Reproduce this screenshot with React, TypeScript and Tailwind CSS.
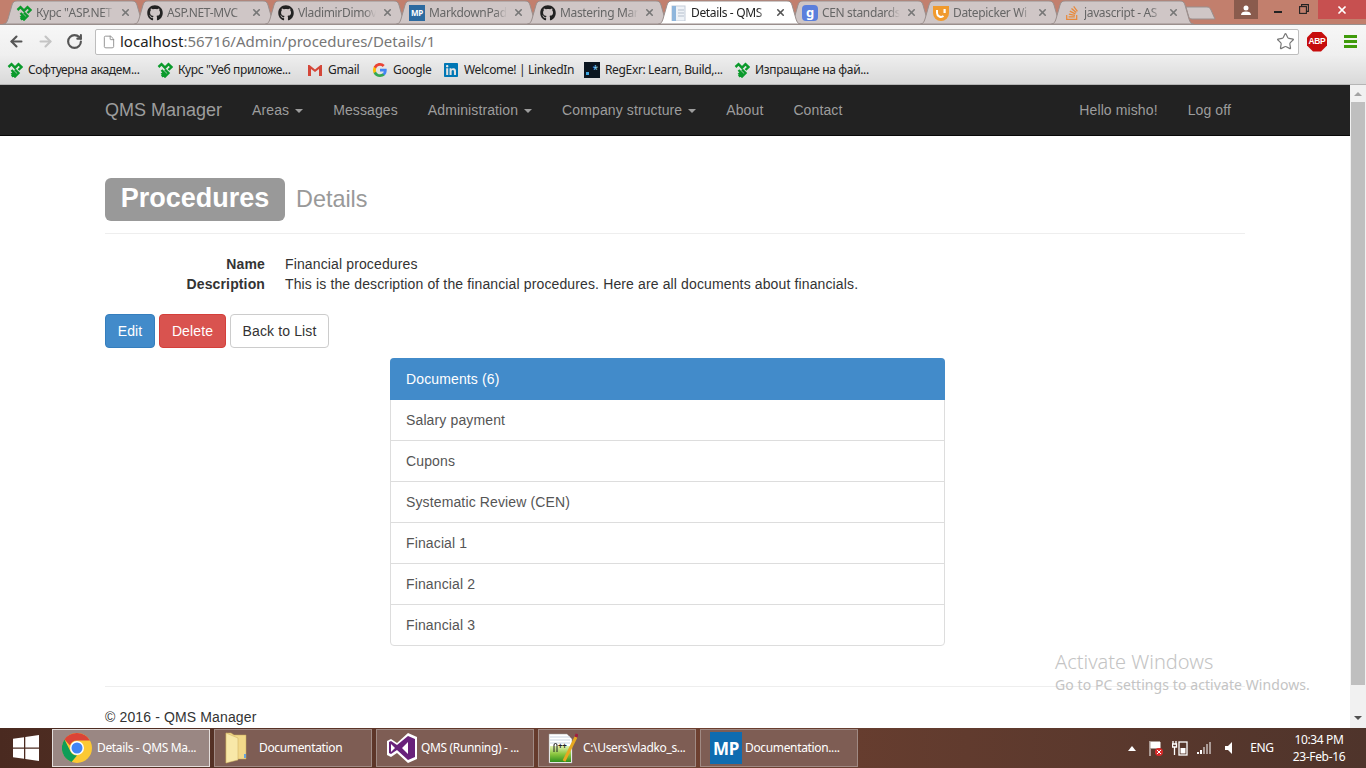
import { ArrowLeft, ArrowRight, RotateCw, Star, File, X } from 'lucide-react'
import { FaGithub, FaLinkedin, FaStackOverflow } from 'react-icons/fa'

const UI_FONT = "font-['Noto_Sans','Open_Sans',sans-serif] tracking-[-0.35px]"

const SoftUni = ({ className = 'w-4 h-4' }: { className?: string }) => (
  <svg viewBox="0 0 16 16" className={className} fill="none" stroke="#0a9a2b" strokeWidth="2.400">
    <path d="M1.500 5 4.500 2.200 8 5.700 11.500 2.200 14.500 5 11.500 8" />
    <path d="M4.500 8 8 11.500 4.800 14.500M8 7.500 11.500 11 8 14.500 4.500 11" />
  </svg>
)

const MpIcon = ({ className = 'w-4 h-4 text-[8px] bg-[#2c6aa0]' }: { className?: string }) => (
  <span className={`flex items-center justify-center text-white font-bold leading-none ${className}`}>
    MP
  </span>
)

const DocIcon = () => (
  <svg viewBox="0 0 16 16" className="w-4 h-4">
    <rect x="1" y="1" width="13" height="15" fill="#eef2f7" stroke="#c3ccd8" />
    <rect x="1" y="1" width="4" height="15" fill="#8fb6dc" />
    <path d="M7 5h6M7 8h6M7 11h6" stroke="#b5bfcc" />
  </svg>
)

const GoogleG = ({ className = 'w-4 h-4' }: { className?: string }) => (
  <svg viewBox="0 0 16 16" className={className}>
    <path d="M14.700 8.200c0-.5 0-1-.1-1.400H8v2.700h3.800a3.200 3.200 0 0 1-1.400 2.100v1.700h2.300c1.300-1.200 2-3 2-5.100z" fill="#4285f4" />
    <path d="M8 15c1.900 0 3.400-.6 4.700-1.700l-2.300-1.700c-.6.4-1.400.7-2.400.7-1.800 0-3.400-1.200-3.900-2.900H1.700v1.800A7 7 0 0 0 8 15z" fill="#34a853" />
    <path d="M4.100 9.400a4.200 4.200 0 0 1 0-2.800V4.800H1.700a7 7 0 0 0 0 6.400z" fill="#fbbc05" />
    <path d="M8 3.800c1 0 2 .4 2.700 1.100l2-2A7 7 0 0 0 1.700 4.800l2.400 1.800C4.600 5 6.200 3.800 8 3.800z" fill="#ea4335" />
  </svg>
)

const CenIcon = () => (
  <span className="flex items-center justify-center w-4 h-4 rounded-sm bg-[#5b7fdc] text-white text-[13px] font-bold leading-none">g</span>
)

const DatepickerIcon = () => (
  <svg viewBox="0 0 16 16" className="w-4 h-4">
    <path d="M0 1h16v7a8 8 0 0 1-16 0z" fill="#f09a2e" />
    <path d="M4 5v3a4 4 0 0 0 6.500 3" fill="none" stroke="#fff" strokeWidth="2" />
    <rect x="10.500" y="4" width="2.200" height="4" fill="#fff" />
  </svg>
)

const TABS = [
  { title: 'Курс "ASP.NET', icon: <SoftUni /> },
  { title: 'ASP.NET-MVC', icon: <FaGithub className="w-4 h-4 text-[#222]" /> },
  { title: 'VladimirDimov', icon: <FaGithub className="w-4 h-4 text-[#222]" /> },
  { title: 'MarkdownPad', icon: <MpIcon /> },
  { title: 'Mastering Mar', icon: <FaGithub className="w-4 h-4 text-[#222]" /> },
  { title: 'Details - QMS', icon: <DocIcon />, active: true },
  { title: 'CEN standards', icon: <CenIcon /> },
  { title: 'Datepicker Wi', icon: <DatepickerIcon /> },
  { title: 'javascript - AS', icon: <FaStackOverflow className="w-4 h-4 text-[#e8893a]" /> },
]

const Tab = ({ title, icon, active }: { title: string; icon: React.ReactNode; active?: boolean }) => (
  <div className={`relative w-[143px] h-[24px] -mr-[12px] shrink-0 flex items-center pl-[13px] pt-[1px] ${active ? 'z-10 text-[#222]' : 'text-[#666]'}`}>
    <svg viewBox="0 0 143 24" className="absolute inset-0 w-[143px] h-[24px]">
      <path
        d="M0.500 24 C3 24 4 22 5 19 L9 5 C10 2 11 1 14 1 L129 1 C132 1 133 2 134 5 L138 19 C139 22 140 24 142.500 24 Z"
        fill={active ? '#ffffff' : '#cfc6c6'}
        stroke="#9a8f8d"
      />
    </svg>
    <span className="relative shrink-0 w-4 h-4 flex items-center justify-center">{icon}</span>
    <span className="relative ml-1 w-[78px] overflow-hidden whitespace-nowrap text-xs leading-4 [mask-image:linear-gradient(to_right,black_85%,transparent)]">
      {title}
    </span>
    <X className={`relative ml-[6px] w-[11px] h-[11px] shrink-0 ${active ? 'text-[#555]' : 'text-[#777]'}`} strokeWidth={3.500} />
  </div>
)

const TabStrip = () => (
  <div className={`h-[25px] shrink-0 flex items-start pl-[3px] bg-[#c27f6d] border-b border-[#9a8f8d] ${UI_FONT}`}>
    {TABS.map(tab => (
      <Tab key={tab.title} {...tab} />
    ))}
    <svg viewBox="0 0 31 14" className="w-[31px] h-[14px] ml-[3px] mt-[6px] shrink-0">
      <path d="M1 1h21c2 0 3 1 4 3l4 9H7C5 13 4 12 3.500 10z" fill="#cfc6c6" stroke="#9a8f8d" />
    </svg>
    <div className="flex-1" />
    <div className="w-[24px] h-[19px] bg-[#8a5b4d] flex items-center justify-center mr-[16px]">
      <svg viewBox="0 0 12 10" className="w-3 h-[10px]" fill="#fff">
        <circle cx="6" cy="3" r="2.500" />
        <path d="M1 10c0-2.500 2-3.500 5-3.500s5 1 5 3.500z" />
      </svg>
    </div>
    <div className="w-[8px] h-[2px] bg-[#222] mt-[11px] mr-[17px]" />
    <svg viewBox="0 0 10 10" className="w-[10px] h-[10px] mt-[4px] mr-[9px]" fill="none" stroke="#222" strokeWidth="1.100">
      <rect x="0.600" y="2.600" width="6.800" height="6.800" />
      <path d="M2.600 2.500V.6h6.800v6.800H7.500" />
    </svg>
    <div className="w-[48px] h-[19px] bg-[#c75050] flex items-center justify-center">
      <X className="w-3 h-3 text-white" strokeWidth={3.500} />
    </div>
  </div>
)

const Toolbar = () => (
  <div className={`h-[31px] shrink-0 flex items-center pt-[2px] bg-gradient-to-b from-[#f7f7f7] to-[#efefef] ${UI_FONT}`}>
    <ArrowLeft className="ml-[8px] w-[17px] h-[17px] text-[#555]" strokeWidth={3} />
    <ArrowRight className="ml-[12px] w-[17px] h-[17px] text-[#c4c4c4]" strokeWidth={3} />
    <RotateCw className="ml-[12px] w-[17px] h-[17px] text-[#555]" strokeWidth={3} />
    <div className="ml-[12px] w-[1204px] h-[26px] bg-white border border-[#bdbdbd] rounded-[2px] flex items-center pl-[6px]">
      <File className="w-[14px] h-[16px] text-[#888] shrink-0" strokeWidth={1.500} />
      <span className="ml-[4px] text-[15px] tracking-normal leading-none text-[#222] whitespace-nowrap">
        localhost<span className="text-[#777]">:56716/Admin/procedures/Details/1</span>
      </span>
      <div className="flex-1" />
      <Star className="w-[19px] h-[19px] text-[#777] mr-[3px]" strokeWidth={1.500} />
    </div>
    <div className="ml-[8px] w-[20px] h-[20px] bg-[#c70d0d] [clip-path:polygon(30%_0,70%_0,100%_30%,100%_70%,70%_100%,30%_100%,0_70%,0_30%)] flex items-center justify-center">
      <span className="text-white text-[8.5px] font-bold leading-none font-['Liberation_Sans',sans-serif]">ABP</span>
    </div>
    <div className="ml-[17px] w-[13px] flex flex-col gap-[2px]">
      <div className="h-[3px] bg-[#3f9b0b]" />
      <div className="h-[3px] bg-[#3f9b0b]" />
      <div className="h-[3px] bg-[#3f9b0b]" />
    </div>
  </div>
)

const BOOKMARKS = [
  { title: 'Софтуерна академ...', icon: <SoftUni />, width: 'w-[150px]' },
  { title: 'Курс "Уеб приложе...', icon: <SoftUni />, width: 'w-[150px]' },
  {
    title: 'Gmail',
    width: 'w-[65px]',
    icon: (
      <svg viewBox="0 0 16 16" className="w-4 h-4">
        <path d="M1 3v11h3V7l4 3 4-3v7h3V3h-1.500L8 7.500 2.500 3z" fill="#d44638" />
      </svg>
    ),
  },
  { title: 'Google', icon: <GoogleG />, width: 'w-[71px]' },
  { title: 'Welcome! | LinkedIn', icon: <FaLinkedin className="w-4 h-4 text-[#0077b5]" />, width: 'w-[141px]' },
  {
    title: 'RegExr: Learn, Build,...',
    width: 'w-[150px]',
    icon: (
      <span className="relative block w-4 h-4 bg-[#0b1620]">
        <span className="absolute left-[2px] bottom-[3px] w-[3px] h-[3px] bg-[#3da6e0]" />
        <span className="absolute right-[2px] top-[-1px] text-[10px] leading-4 text-[#7fd0ff]">*</span>
      </span>
    ),
  },
  { title: 'Изпращане на фай...', icon: <SoftUni />, width: 'w-[150px]' },
]

const BookmarksBar = () => (
  <div className={`h-[29px] shrink-0 flex items-center pl-[7px] bg-gradient-to-b from-[#eeeeee] to-[#d9d9d9] border-b border-[#b5b5b5] ${UI_FONT}`}>
    {BOOKMARKS.map(b => (
      <div key={b.title} className={`flex items-center gap-[5px] shrink-0 ${b.width}`}>
        <span className="shrink-0 w-4 h-4">{b.icon}</span>
        <span className="text-xs text-[#222] whitespace-nowrap">{b.title}</span>
      </div>
    ))}
  </div>
)

const NAV_LEFT = [
  { label: 'Areas', caret: true },
  { label: 'Messages' },
  { label: 'Administration', caret: true },
  { label: 'Company structure', caret: true },
  { label: 'About' },
  { label: 'Contact' },
]

const Caret = () => (
  <span className="inline-block ml-[6px] align-middle w-0 h-0 border-x-4 border-x-transparent border-t-4 border-t-[#9d9d9d]" />
)

const Navbar = () => (
  <nav className="h-[51px] shrink-0 bg-[#222] border-b border-[#080808] text-[#9d9d9d] text-sm tracking-[0.11px]">
    <div className="h-[50px] flex items-center pl-[105px] pr-[119px]">
      <span className="text-lg tracking-normal mr-[30px]">QMS Manager</span>
      <div className="flex gap-[30px]">
        {NAV_LEFT.map(item => (
          <a key={item.label} className="whitespace-nowrap">
            {item.label}
            {item.caret && <Caret />}
          </a>
        ))}
      </div>
      <div className="ml-auto flex gap-[30px]">
        <a>Hello misho!</a>
        <a>Log off</a>
      </div>
    </div>
  </nav>
)

const DOCUMENTS = ['Salary payment', 'Cupons', 'Systematic Review (CEN)', 'Finacial 1', 'Financial 2', 'Financial 3']

const PageContent = () => (
  <div className="flex-1 min-w-0 overflow-hidden bg-white px-[105px] pt-[42px] text-sm leading-5 tracking-[0.13px] text-[#333]">
    <div className="flex items-start border-b border-[#eee] pb-[12px]">
      <span className="h-[43px] w-[180px] text-center rounded-[6px] bg-[#999] text-white font-bold text-[27px] tracking-normal leading-[40px]">Procedures</span>
      <span className="ml-[11px] h-[43px] text-[23.4px] tracking-normal leading-[42px] text-[#999]">Details</span>
    </div>

    <dl className="mt-[20px] grid grid-cols-[160px_1fr] gap-x-[20px]">
      <dt className="font-bold text-right">Name</dt>
      <dd>Financial procedures</dd>
      <dt className="font-bold text-right">Description</dt>
      <dd>This is the description of the financial procedures. Here are all documents about financials.</dd>
    </dl>

    <div className="mt-[20px] flex gap-[4px]">
      <button className="h-[34px] w-[50px] rounded bg-[#428bca] border border-[#357ebd] text-white">Edit</button>
      <button className="h-[34px] w-[67px] rounded bg-[#d9534f] border border-[#d43f3a] text-white">Delete</button>
      <button className="h-[34px] w-[99px] rounded bg-white border border-[#ccc] text-[#333]">Back to List</button>
    </div>

    <div className="mt-[10px] ml-[285px] w-[555px] rounded border border-[#ddd]">
      <div className="h-[42px] -mx-px -mt-px px-[16px] flex items-center rounded-t bg-[#428bca] text-white">Documents (6)</div>
      {DOCUMENTS.map((doc, i) => (
        <div key={doc} className={`px-[15px] flex items-center text-[#555] ${i > 0 ? 'h-[41px] border-t border-[#ddd]' : 'h-[40px]'}`}>
          {doc}
        </div>
      ))}
    </div>

    <hr className="mt-[40px] border-[#eee]" />
    <p className="mt-[20px]">© 2016 - QMS Manager</p>
  </div>
)

const Scrollbar = () => (
  <div className="w-4 shrink-0 bg-[#f1f1f1] flex flex-col items-center">
    <span className="mt-[7px] w-0 h-0 border-x-4 border-x-transparent border-b-4 border-b-[#a3a3a3]" />
    <div className="mt-[6px] w-[14px] h-[583px] bg-[#bfbfbf]" />
    <div className="flex-1" />
    <span className="mb-[8px] w-0 h-0 border-x-4 border-x-transparent border-t-4 border-t-[#505050]" />
  </div>
)

const ChromeLogo = () => (
  <svg viewBox="0 0 30 30" className="w-[30px] h-[30px]">
    <circle cx="15" cy="15" r="15" fill="#fcc934" />
    <path d="M15 0a15 15 0 0 1 13 7.500H15a7.500 7.500 0 0 0-7 5L2.500 6.500A15 15 0 0 1 15 0z" fill="#db4437" />
    <path d="M2.500 6.500 8.500 18.500a7.500 7.500 0 0 0 6.500 4L9.500 29A15 15 0 0 1 2.500 6.500z" fill="#0f9d58" />
    <circle cx="15" cy="15" r="7" fill="#fff" />
    <circle cx="15" cy="15" r="5.500" fill="#4285f4" />
  </svg>
)

const FolderIcon = () => (
  <svg viewBox="0 0 24 32" className="w-6 h-8">
    <path d="M2 1h5l3 2h12v24H10l-8 4z" fill="#f2d98a" stroke="#c9a95a" strokeWidth="0.500" />
    <path d="M2 1l12 5v22l-12 3z" fill="#f8e8a8" stroke="#c9a95a" strokeWidth="0.500" />
    <rect x="20" y="22" width="2" height="4" fill="#6aa5d8" />
  </svg>
)

const VsIcon = () => (
  <svg viewBox="0 0 32 32" className="w-8 h-8">
    <path d="M22 1 31 5v22l-9 4L11 21l-6 4-4-2V9l4-2 6 4z" fill="#fff" />
    <path d="M22 4l7 3v18l-7 3-11-10-6 4-2-1V10l2-1 6 4zm0 6-6 6 6 6zM5 12v8l4-4z" fill="#68217a" fillRule="evenodd" />
  </svg>
)

const NotepadIcon = () => (
  <svg viewBox="0 0 30 32" className="w-[30px] h-8">
    <defs>
      <linearGradient id="npp" x1="0" y1="0" x2="0" y2="1">
        <stop offset="0" stopColor="#dff0b0" />
        <stop offset="0.500" stopColor="#8cc63f" />
        <stop offset="1" stopColor="#2f8f1d" />
      </linearGradient>
    </defs>
    <path d="M1 2h18l5 5v24H1z" fill="#fff" stroke="#9a9a9a" strokeWidth="0.500" />
    <path d="M2 5h20M2 8h20M2 11h20" stroke="#c9d3e0" />
    <rect x="2" y="14" width="21" height="16" fill="url(#npp)" />
    <path d="M6 20v-7a1.500 1.500 0 0 1 3 0v7" fill="none" stroke="#222" />
    <text x="10" y="17" fontSize="8" fontWeight="700" fill="#222">++</text>
    <path d="M16 29 28 5" stroke="#e8a820" strokeWidth="3" />
    <path d="M28 5 29 2" stroke="#a02040" strokeWidth="3" />
  </svg>
)

const TASKS = [
  { title: 'Details - QMS Ma...', icon: <ChromeLogo />, active: true, text: 'ml-[5px]' },
  { title: 'Documentation', icon: <FolderIcon />, text: 'ml-[11px]' },
  { title: 'QMS (Running) - ...', icon: <VsIcon />, text: 'ml-[3px]' },
  { title: 'C:\\Users\\vladko_s...', icon: <NotepadIcon />, text: 'ml-[5px]' },
  { title: 'Documentation....', icon: <MpIcon className="w-8 h-8 text-[17px] bg-[#0f6cb0]" />, text: 'ml-[3px]' },
]

const Taskbar = () => (
  <div className={`h-10 shrink-0 flex items-center bg-gradient-to-r from-[#4a2a20] via-[#6e4030] to-[#4f342b] text-white text-xs ${UI_FONT}`}>
    <div className="w-[52px] flex justify-center shrink-0">
      <svg viewBox="0 0 26 26" className="w-[26px] h-[26px]" fill="#fff">
        <path d="M0 3.700 11 2.200v10.300H0zM12.300 2 26 0v12.500H12.300zM0 13.800h11v10L0 22.300zM12.300 13.800H26V26l-13.700-2z" />
      </svg>
    </div>
    <div className="flex gap-[4px]">
      {TASKS.map(t => (
        <div
          key={t.title}
          className={`w-[158px] h-[38px] flex items-center pl-[9px] border ${t.active ? 'bg-[#9a8783] border-[#e4dedc]' : 'bg-[#7e5d54] border-[#a08a84]'}`}
        >
          <span className="shrink-0">{t.icon}</span>
          <span className={`whitespace-nowrap ${t.text}`}>{t.title}</span>
        </div>
      ))}
    </div>
    <div className="ml-auto flex items-center">
      <span className="w-0 h-0 border-x-4 border-x-transparent border-b-[5px] border-b-white" />
      <svg viewBox="0 0 16 16" className="ml-[12px] w-4 h-4">
        <path d="M2 1v15M3 2h9v6H3z" stroke="#fff" fill="#fff" />
        <circle cx="11" cy="12" r="4" fill="#d92b2b" />
        <path d="M9 10l4 4M13 10l-4 4" stroke="#fff" />
      </svg>
      <svg viewBox="0 0 16 16" className="ml-[8px] w-4 h-4" fill="none" stroke="#fff" strokeWidth="1.300">
        <path d="M1 1v3M4 1v3M.5 4h4v3h-4zM2.500 7v8" />
        <rect x="7" y="2" width="8" height="13" />
        <rect x="8.500" y="8" width="5" height="5.500" fill="#fff" stroke="none" />
      </svg>
      <svg viewBox="0 0 16 16" className="ml-[9px] w-4 h-4" fill="#fff">
        <rect x="0" y="12" width="2" height="2" />
        <rect x="3" y="10" width="2" height="4" />
        <rect x="6" y="7" width="2" height="7" opacity="0.500" />
        <rect x="9" y="4" width="2" height="10" opacity="0.500" />
        <rect x="12" y="2" width="2" height="12" opacity="0.500" />
      </svg>
      <svg viewBox="0 0 16 16" className="ml-[9px] w-4 h-4" fill="#fff">
        <path d="M3 6h3l4-4v12l-4-4H3z" />
      </svg>
      <span className="ml-[12px] w-[24px] text-center whitespace-nowrap">ENG</span>
      <div className="ml-[18px] mr-[20px] w-[54px] flex flex-col items-center leading-[17px] whitespace-nowrap">
        <span>10:34 PM</span>
        <span>23-Feb-16</span>
      </div>
    </div>
  </div>
)

export default function App() {
  return (
    <div className="relative w-[1366px] h-[768px] flex flex-col overflow-hidden font-['Liberation_Sans',Arial,sans-serif]">
      <TabStrip />
      <Toolbar />
      <BookmarksBar />
      <div className="flex-1 min-h-0 flex">
        <div className="flex-1 min-w-0 flex flex-col overflow-hidden">
          <Navbar />
          <PageContent />
        </div>
        <Scrollbar />
      </div>
      <Taskbar />
      <div className="absolute left-[1055px] top-[648px] pointer-events-none text-[#c4c4c4] font-['Noto_Sans','Open_Sans',sans-serif]">
        <p className="text-[20px] leading-[28px] font-light">Activate Windows</p>
        <p className="text-sm leading-[18px] tracking-[0.08px]">Go to PC settings to activate Windows.</p>
      </div>
    </div>
  )
}
